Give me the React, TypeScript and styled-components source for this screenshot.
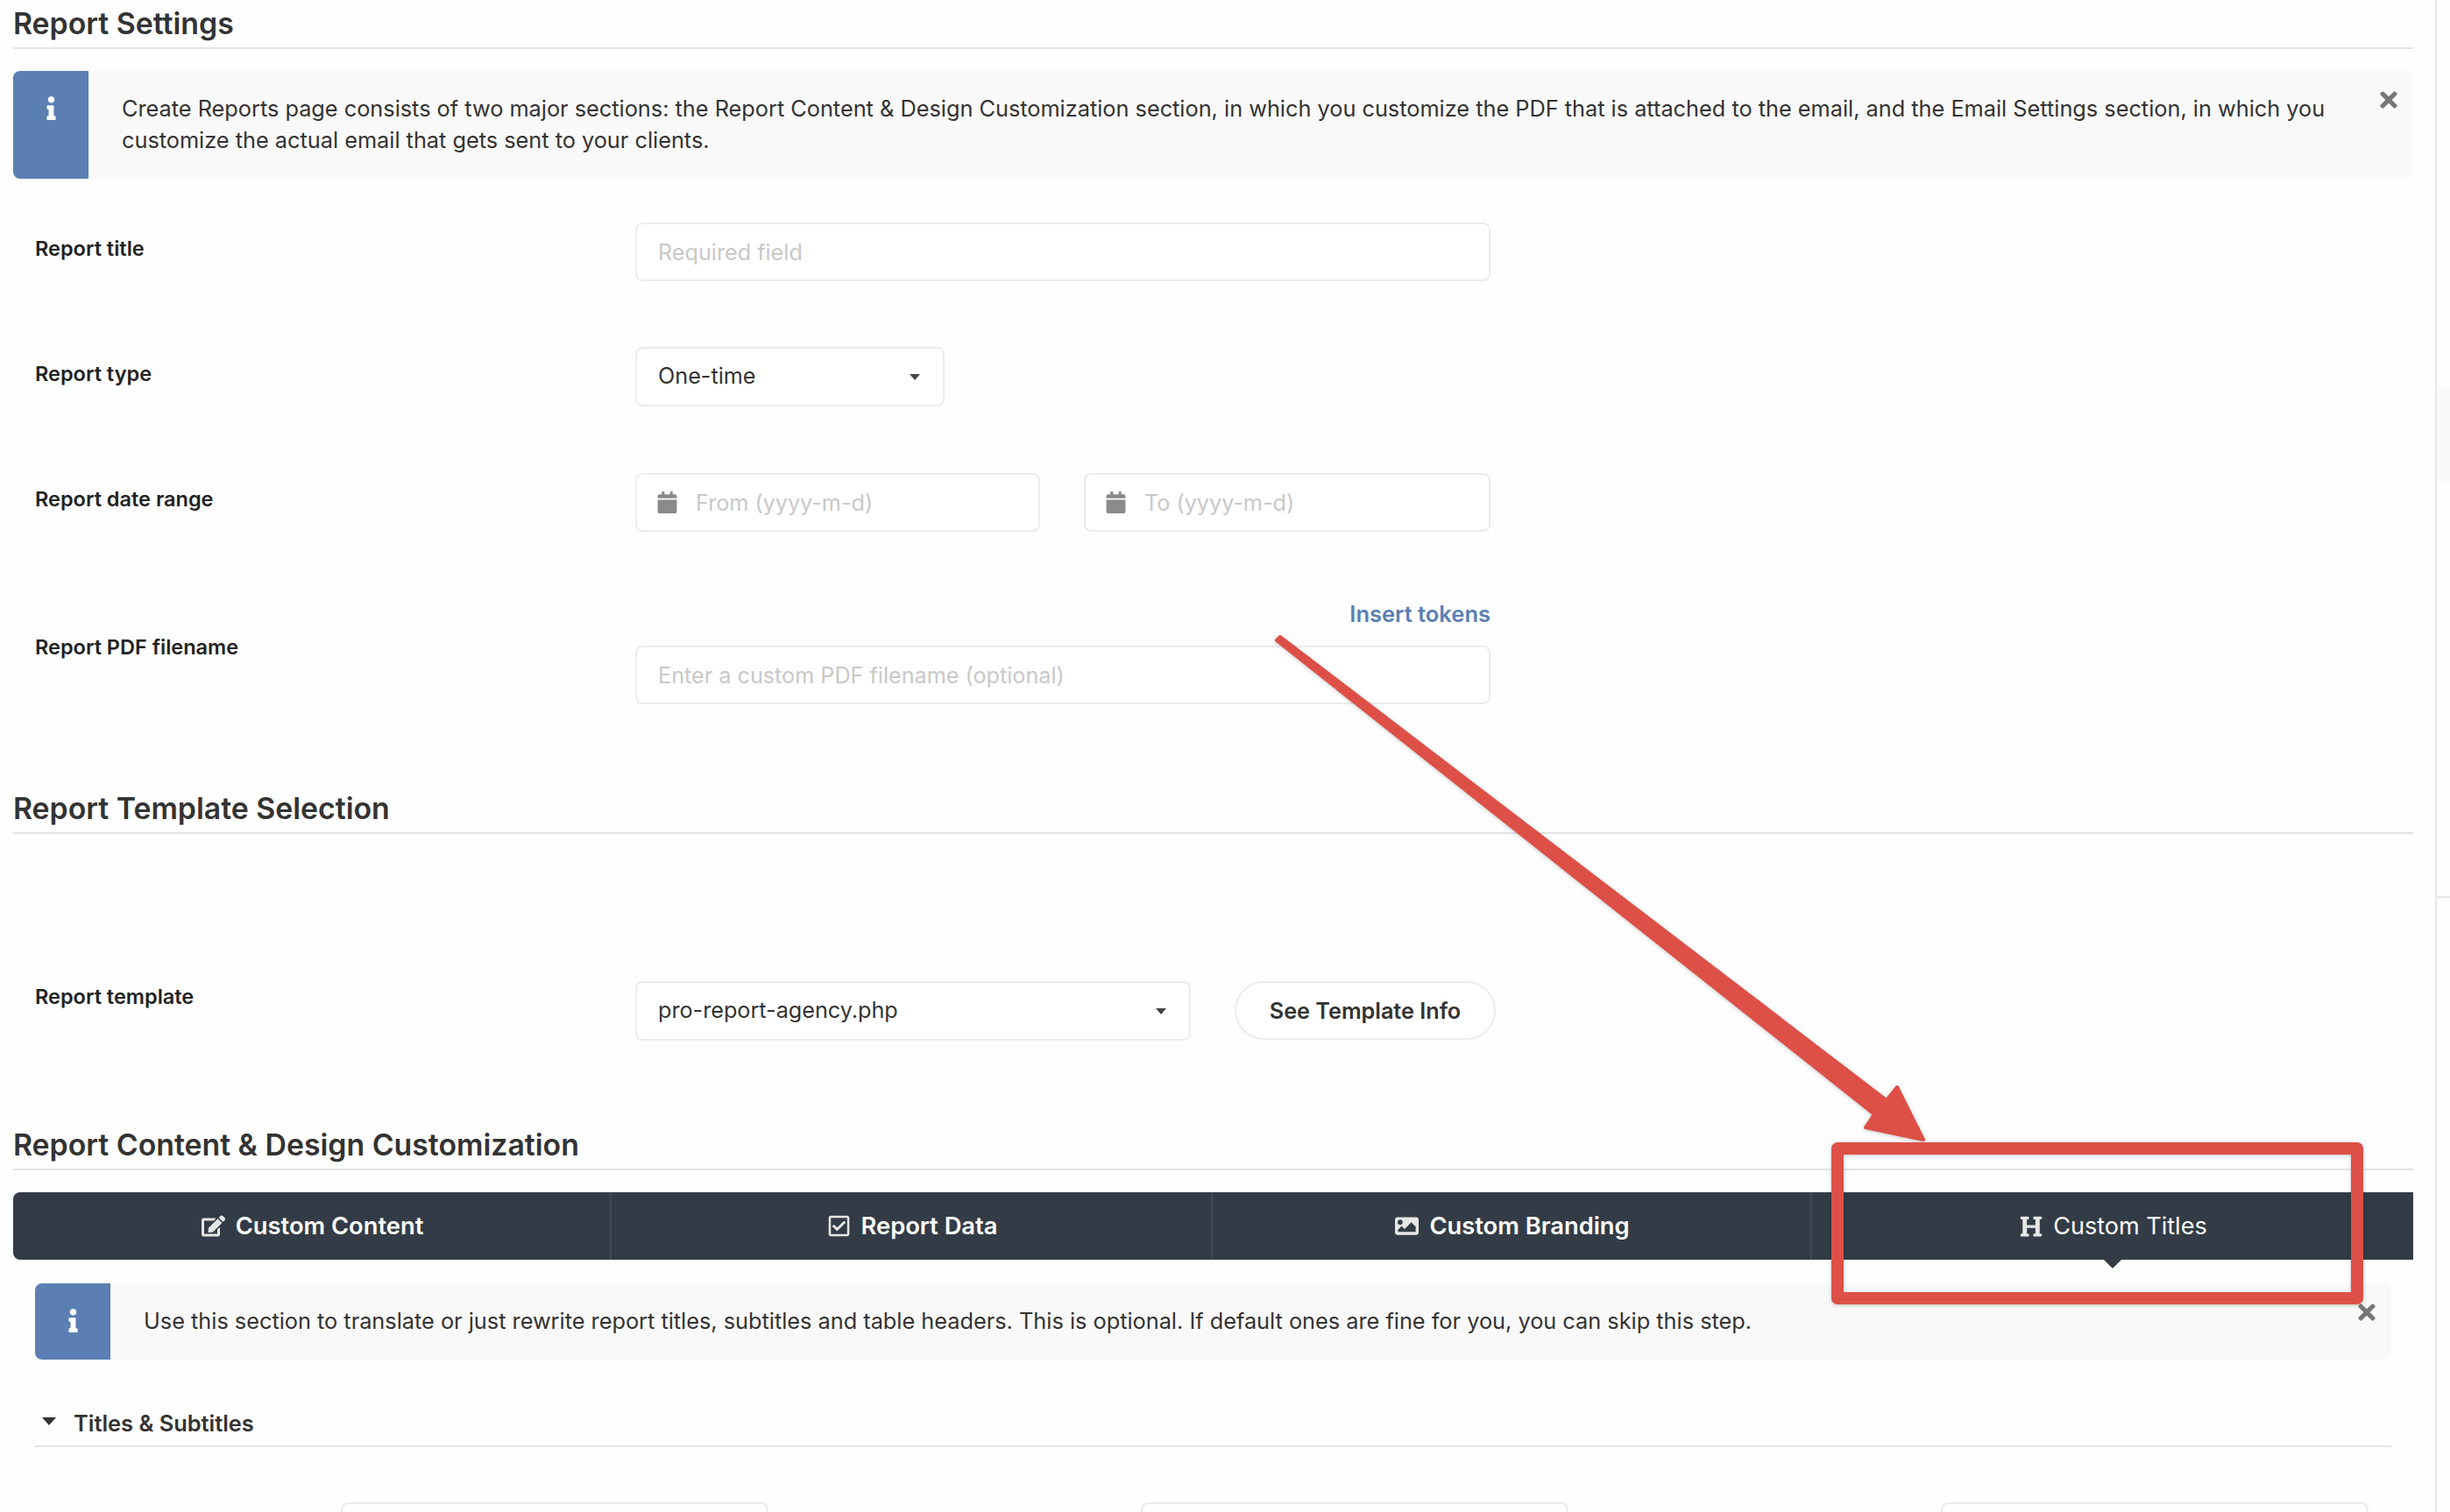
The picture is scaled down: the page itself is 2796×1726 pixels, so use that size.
import React from "react";
import styled, { createGlobalStyle } from "styled-components";
import { FaInfo, FaTimes, FaCalendar, FaEdit, FaRegCheckSquare, FaImage, FaHeading } from "react-icons/fa";

const Global = createGlobalStyle`
  html, body { margin: 0; padding: 0; background: #fefefe; }
  body { font-family: Inter, "Liberation Sans", sans-serif; color: #333; overflow: hidden; }
  * { box-sizing: border-box; }
`;

const Page = styled.div`
  position: relative;
  display: flex;
  width: 2796px;
  height: 1726px;
  overflow: hidden;
`;
const Main = styled.main`
  width: 2779px;
  flex: none;
  padding: 0 25px 0 15px;
`;
const SideStrip = styled.aside`
  flex: 1;
  height: 100%;
  border-left: 2px solid #e6e6e6;
  padding-top: 443px;
`;
const SideTab = styled.div`
  height: 106px;
  background: #f9f9f9;
  margin-bottom: 474px;
`;
const SideRule = styled.div`
  height: 2px;
  background: #e6e6e6;
`;
const Heading = styled.h2<{ $top?: number }>`
  margin: ${(p) => p.$top ?? 0}px 0 0;
  height: 56px;
  line-height: 54px;
  font-size: 33.8px;
  font-weight: 600;
  color: #333;
  border-bottom: 2px solid #e3e3e3;
`;
const InfoBox = styled.div<{ $top: number }>`
  position: relative;
  display: flex;
  margin-top: ${(p) => p.$top}px;
  background: #f9f9f9;
  border-radius: 8px;
  overflow: hidden;
`;
const InfoBadge = styled.div`
  flex: none;
  width: 86px;
  background: #5b7fb3;
  color: #fff;
  display: flex;
  justify-content: center;
  padding-top: 29px;
`;
const InfoText = styled.p`
  margin: 0;
  padding: 25px 50px 26px 38px;
  font-size: 25.3px;
  line-height: 36px;
  color: #333;
`;
const CloseBtn = styled.span`
  position: absolute;
  top: 19px;
  right: 14px;
  color: #777;
  display: flex;
`;
const Row = styled.div<{ $top: number }>`
  display: flex;
  align-items: flex-start;
  margin-top: ${(p) => p.$top}px;
  padding-left: 25px;
`;
const Label = styled.label<{ $top: number }>`
  flex: none;
  width: 685px;
  margin-top: ${(p) => p.$top}px;
  font-size: 23.5px;
  line-height: 30px;
  font-weight: 600;
  color: #222;
`;
const FieldGroup = styled.div`
  display: flex;
  flex-direction: column;
  width: 976px;
`;
const TokenLink = styled.a`
  align-self: flex-end;
  font-size: 25.5px;
  line-height: 30px;
  font-weight: 600;
  color: #5b7fb3;
  margin-bottom: 21px;
`;
const Input = styled.input<{ $w?: number }>`
  display: block;
  width: ${(p) => (p.$w ? `${p.$w}px` : "100%")};
  height: 67px;
  padding: 0 24px;
  background: #fff;
  border: 2px solid #ececec;
  border-radius: 8px;
  font: 400 25.2px Inter, sans-serif;
  outline: none;
  &::placeholder { color: #c8c8c8; opacity: 1; }
`;
const DateRow = styled.div`
  display: flex;
  gap: 50px;
`;
const DateField = styled.div<{ $w: number }>`
  display: flex;
  align-items: center;
  gap: 20px;
  width: ${(p) => p.$w}px;
  height: 67px;
  padding: 0 22px;
  border: 2px solid #ececec;
  border-radius: 8px;
  background: #fff;
  color: #8a8a8a;
  svg { flex: none; }
`;
const DateInput = styled.input`
  flex: 1;
  min-width: 0;
  border: 0;
  padding: 0;
  background: transparent;
  outline: none;
  font: 400 25.2px Inter, sans-serif;
  &::placeholder { color: #c8c8c8; opacity: 1; }
`;
const Select = styled.div<{ $w: number }>`
  display: flex;
  align-items: center;
  justify-content: space-between;
  width: ${(p) => p.$w}px;
  height: 68px;
  padding: 0 26px 2px 24px;
  border: 2px solid #ececec;
  border-radius: 8px;
  background: #fff;
  font-size: 25.2px;
  color: #333;
`;
const Caret = styled.span`
  width: 0;
  height: 0;
  margin-top: 2px;
  border-left: 6.5px solid transparent;
  border-right: 6.5px solid transparent;
  border-top: 7px solid #444;
`;
const PillButton = styled.button`
  margin-left: 50px;
  width: 298px;
  height: 67px;
  background: #fff;
  border: 2px solid #ececec;
  border-radius: 34px;
  font: 600 25.2px Inter, sans-serif;
  color: #333;
`;
const TabBar = styled.nav`
  display: grid;
  grid-template-columns: 683px 686px 684px 1fr;
  height: 77px;
  margin-top: 25px;
  background: #333c46;
  border-radius: 8px 0 0 8px;
`;
const Tab = styled.div<{ $active?: boolean; $last?: boolean }>`
  position: relative;
  display: flex;
  align-items: center;
  justify-content: center;
  gap: 12px;
  padding-left: 2px;
  color: #fff;
  font-size: ${(p) => (p.$active ? 27 : 27.3)}px;
  font-weight: ${(p) => (p.$active ? 400 : 600)};
  border-right: ${(p) => (p.$last ? "0" : "2px solid #3e4954")};
  svg { color: #e6e6e6; flex: none; }
  ${(p) =>
    p.$active &&
    `&::after {
      content: "";
      position: absolute;
      left: 50%;
      bottom: -10px;
      margin-left: -10px;
      border-left: 10px solid transparent;
      border-right: 10px solid transparent;
      border-top: 10px solid #333c46;
    }`}
`;
const TabBody = styled.section`
  padding: 0 25px;
`;
const SubHead = styled.h3`
  display: flex;
  align-items: flex-start;
  gap: 20px;
  margin: 55px 0 0;
  height: 45px;
  padding-left: 8px;
  font-size: 25.4px;
  line-height: 36px;
  font-weight: 600;
  color: #333;
  border-bottom: 2px solid #e3e3e3;
`;
const SubCaret = styled.span`
  margin-top: 11px;
  width: 0;
  height: 0;
  border-left: 8px solid transparent;
  border-right: 8px solid transparent;
  border-top: 9px solid #333;
`;
const TitleGrid = styled.div`
  display: grid;
  grid-template-columns: repeat(3, 913px);
  margin-top: 63px;
  padding-left: 349px;
`;
const Overlay = styled.svg`
  position: absolute;
  inset: 0;
  width: 2796px;
  height: 1726px;
  pointer-events: none;
  filter: drop-shadow(0 1px 2px rgba(0, 0, 0, 0.22));
`;

const Info = ({ top, children }: { top: number; children: React.ReactNode }) => (
  <InfoBox $top={top}>
    <InfoBadge><FaInfo size={27} /></InfoBadge>
    <InfoText>{children}</InfoText>
    <CloseBtn><FaTimes size={28} /></CloseBtn>
  </InfoBox>
);

export default function App() {
  return (
    <Page>
      <Global />
      <Main>
        <Heading>Report Settings</Heading>
        <Info top={25}>
          Create Reports page consists of two major sections: the Report Content &amp; Design Customization section, in which you customize the PDF that is attached to the email, and the Email Settings section, in which you customize the actual email that gets sent to your clients.
        </Info>
        <Row $top={50}>
          <Label $top={15}>Report title</Label>
          <FieldGroup><Input placeholder="Required field" /></FieldGroup>
        </Row>
        <Row $top={75}>
          <Label $top={16}>Report type</Label>
          <Select $w={353}>One-time<Caret /></Select>
        </Row>
        <Row $top={76}>
          <Label $top={15}>Report date range</Label>
          <DateRow>
            <DateField $w={462}><FaCalendar size={25} /><DateInput placeholder="From (yyyy-m-d)" /></DateField>
            <DateField $w={464}><FaCalendar size={25} /><DateInput placeholder="To (yyyy-m-d)" /></DateField>
          </DateRow>
        </Row>
        <Row $top={79}>
          <Label $top={38}>Report PDF filename</Label>
          <FieldGroup>
            <TokenLink>Insert tokens</TokenLink>
            <Input placeholder="Enter a custom PDF filename (optional)" />
          </FieldGroup>
        </Row>
        <Heading $top={92}>Report Template Selection</Heading>
        <Row $top={168}>
          <Label $top={3}>Report template</Label>
          <Select $w={634}>pro-report-agency.php<Caret /></Select>
          <PillButton>See Template Info</PillButton>
        </Row>
        <Heading $top={92}>Report Content &amp; Design Customization</Heading>
        <TabBar>
          <Tab><FaEdit size={27} />Custom Content</Tab>
          <Tab><FaRegCheckSquare size={27} />Report Data</Tab>
          <Tab><FaImage size={27} />Custom Branding</Tab>
          <Tab $active $last><FaHeading size={26} />Custom Titles</Tab>
        </TabBar>
        <TabBody>
          <Info top={27}>
            Use this section to translate or just rewrite report titles, subtitles and table headers. This is optional. If default ones are fine for you, you can skip this step.
          </Info>
          <SubHead><SubCaret />Titles &amp; Subtitles</SubHead>
          <TitleGrid>
            <Input $w={488} />
            <Input $w={488} />
            <Input $w={488} />
          </TitleGrid>
        </TabBody>
      </Main>
      <SideStrip>
        <SideTab />
        <SideRule />
      </SideStrip>
      <Overlay viewBox="0 0 2796 1726">
        <g fill="#dd5047" stroke="#dd5047" strokeWidth="4" strokeLinejoin="round">
          <polygon points="1457,731 1461,727 2153,1256 2165,1241 2195,1301 2129,1287 2139,1272" />
          <rect x="2097" y="1311" width="593" height="171" fill="none" strokeWidth="14" />
        </g>
      </Overlay>
    </Page>
  );
}
